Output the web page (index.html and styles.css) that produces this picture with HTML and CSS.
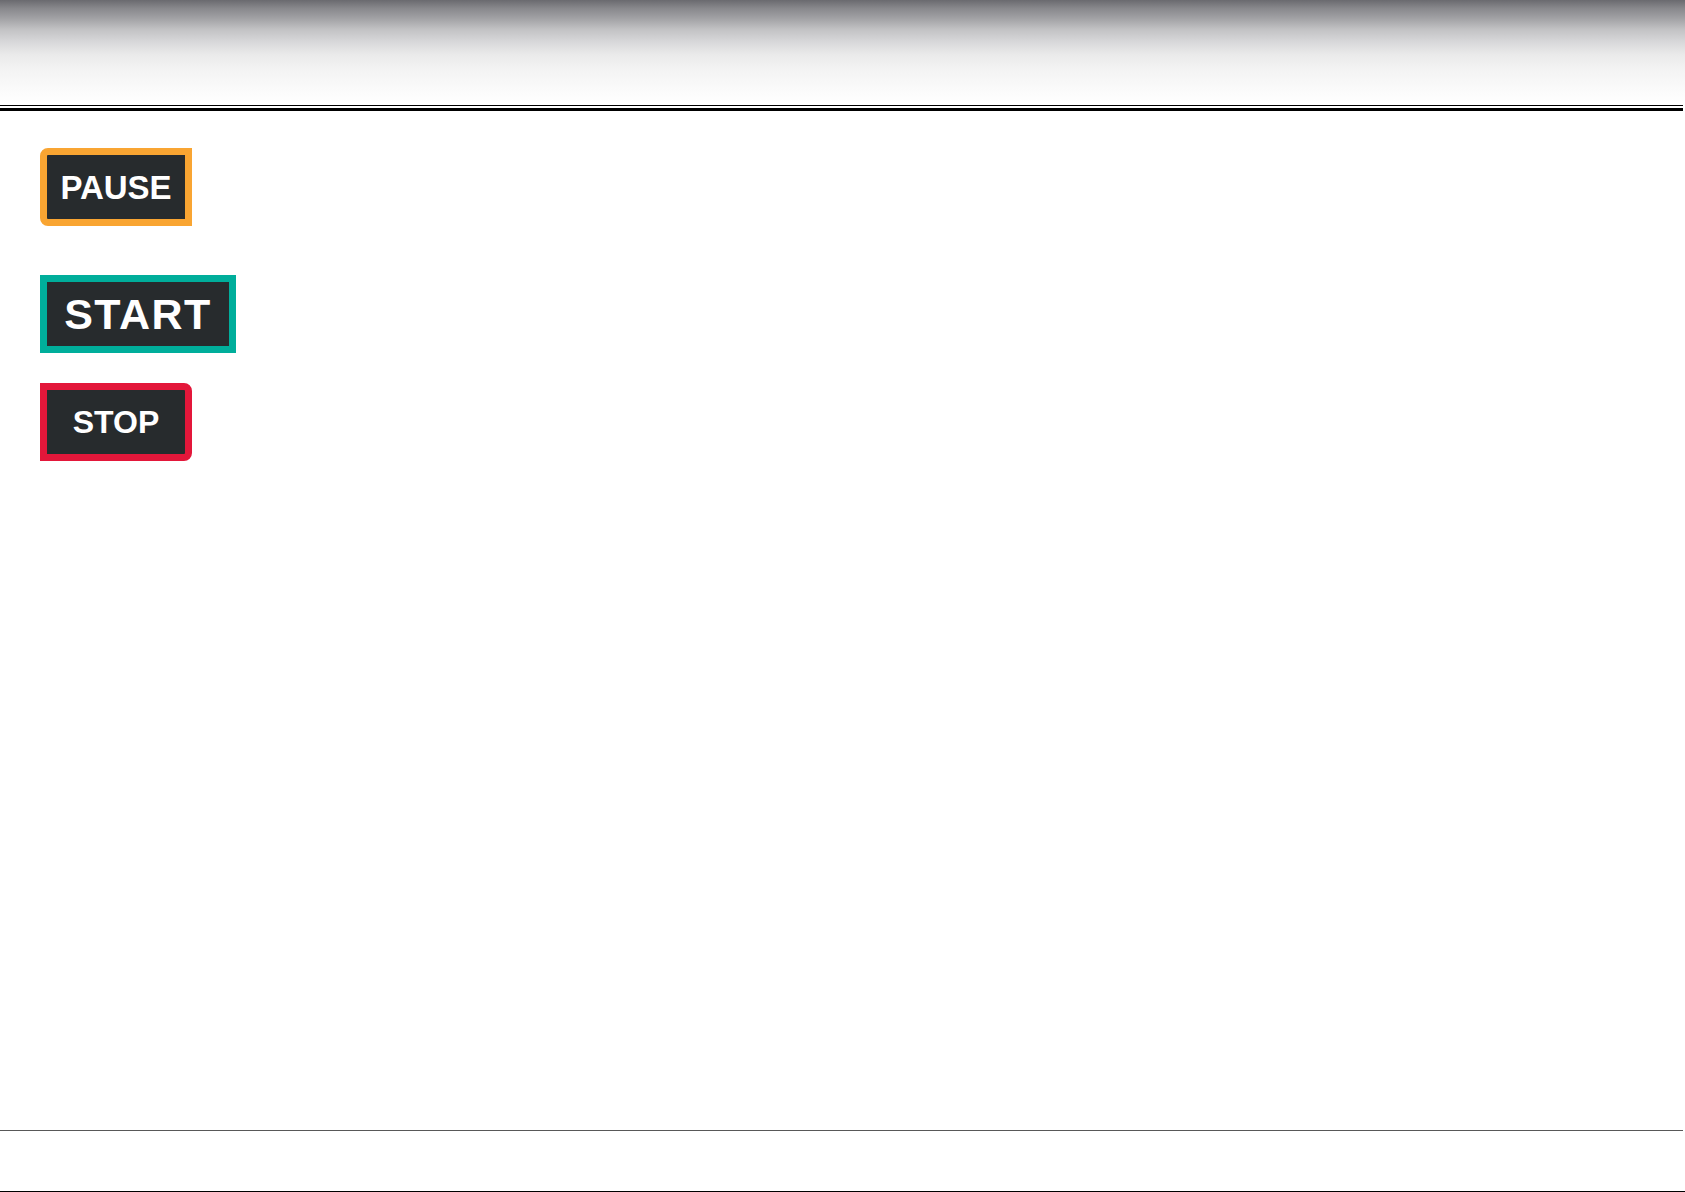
FILE: index.html
```html
<!DOCTYPE html>
<html lang="en">
<head>
<meta charset="utf-8">
<title>Controls</title>
<link rel="stylesheet" href="styles.css">
</head>
<body>
<div class="page">
  <header class="header">
    <div class="header-fill"></div>
    <div class="rule rule-thin"></div>
    <div class="rule rule-thick"></div>
  </header>
  <main class="content">
    <div class="btn btn-pause">PAUSE</div>
    <div class="btn btn-start">START</div>
    <div class="btn btn-stop">STOP</div>
  </main>
  <footer class="footer">
    <div class="footer-rule"></div>
    <div class="footer-space"></div>
    <div class="bottom-rule"></div>
  </footer>
</div>
</body>
</html>
```
FILE: styles.css
```css
html, body {
  margin: 0;
  padding: 0;
  background: #ffffff;
}
.page {
  width: 1685px;
  height: 1192px;
  display: flex;
  flex-direction: column;
  overflow: hidden;
}
.header {
  display: flex;
  flex-direction: column;
}
.header-fill {
  height: 105px;
  background: linear-gradient(to bottom,
    #6a6a6f 0%,
    #88888c 8%,
    #a3a3a6 18%,
    #c2c2c4 28%,
    #d8d8da 40%,
    #eaeaea 52%,
    #f3f3f3 66%,
    #fafafa 84%,
    #ffffff 100%);
}
.rule {
  background: #000000;
  margin-right: 2px;
}
.rule-thin {
  height: 1px;
}
.rule-thick {
  height: 3px;
  margin-top: 2px;
}
.content {
  flex: 1;
  display: flex;
  flex-direction: column;
  align-items: flex-start;
  padding: 37px 0 0 40px;
}
.btn {
  box-sizing: border-box;
  height: 78px;
  border: 7px solid;
  background: #272b2d;
  color: #ffffff;
  font-family: "Liberation Sans", Arial, sans-serif;
  font-weight: bold;
  line-height: 1;
  display: flex;
  align-items: center;
  justify-content: center;
}
.btn-pause {
  width: 152px;
  border-color: #f9a532;
  border-radius: 8px 0 0 8px;
  font-size: 33px;
}
.btn-start {
  width: 196px;
  margin-top: 49px;
  border-color: #00ae9b;
  font-size: 43px;
  letter-spacing: 1.5px;
}
.btn-stop {
  width: 152px;
  margin-top: 30px;
  border-color: #e3173a;
  border-radius: 0 8px 8px 0;
  font-size: 32px;
}
.footer {
  display: flex;
  flex-direction: column;
}
.footer-rule {
  height: 1px;
  background: #585858;
  margin-right: 2px;
}
.footer-space {
  height: 60px;
}
.bottom-rule {
  height: 1px;
  background: #000000;
}
```
